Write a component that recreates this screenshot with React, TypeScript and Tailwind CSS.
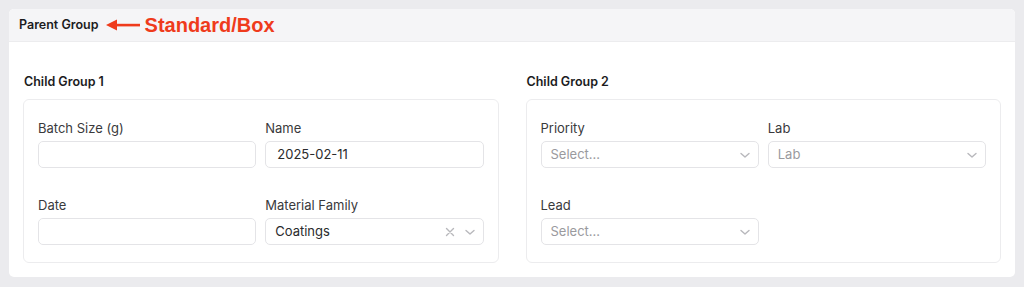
import React from "react";

const Chevron = () => (
  <svg width="12" height="12" viewBox="0 0 12 12" fill="none" stroke="#b8b8bc" strokeWidth="1.4" strokeLinecap="round" strokeLinejoin="round">
    <path d="M2 4.5 L6 8 L10 4.5" />
  </svg>
);

const Cross = () => (
  <svg width="10" height="10" viewBox="0 0 10 10" fill="none" stroke="#b8b8bc" strokeWidth="1.4" strokeLinecap="round">
    <path d="M1.5 1.5 L8.5 8.5 M8.5 1.5 L1.5 8.5" />
  </svg>
);

const Label = ({ children }: { children: React.ReactNode }) => (
  <div className="h-4 leading-4 text-[13px] text-[#3a3a3c] mb-[5px]">{children}</div>
);

const Input = ({ value }: { value?: string }) => (
  <div className="h-[27px] rounded-[5px] border border-[#e4e4e7] bg-white flex items-center px-[11px] text-[13px] text-[#2a2a2c]">
    {value}
  </div>
);

const Select = ({ value, placeholder, clear }: { value?: string; placeholder?: string; clear?: boolean }) => (
  <div className="h-[27px] rounded-[5px] border border-[#e4e4e7] bg-white flex items-center pl-[9px] pr-[7px] text-[13px]">
    <span className={value ? "flex-1 text-[#2a2a2c]" : "flex-1 text-[#9a9a9e]"}>{value ?? placeholder}</span>
    {clear && (
      <span className="mr-[9px] flex items-center">
        <Cross />
      </span>
    )}
    <Chevron />
  </div>
);

const Field = ({ label, children }: { label: string; children: React.ReactNode }) => (
  <div className="flex flex-col">
    <Label>{label}</Label>
    {children}
  </div>
);

const ChildGroup = ({ title, children }: { title: string; children: React.ReactNode }) => (
  <div className="flex-1 flex flex-col">
    <div className="h-4 leading-4 text-[12.5px] font-semibold text-[#1c1c1e] mb-[9px] pl-px">{title}</div>
    <div className="rounded-[6px] border border-[#ececee] pt-[20px] px-[14px] pb-[17px]">
      <div className="grid grid-cols-2 gap-x-[9px] gap-y-[29px]">{children}</div>
    </div>
  </div>
);

export default function App() {
  return (
    <div
      className="w-[1024px] h-[287px] bg-[#ebebee] p-[9px]"
      style={{ fontFamily: "Inter, 'Noto Sans', sans-serif" }}
    >
      <div className="bg-white rounded-[5px] overflow-hidden h-[268px] w-[1006px] flex flex-col">
        <div className="h-[33px] bg-[#f5f5f7] border-b border-[#ececee] flex items-center pl-[10px]">
          <span className="text-[12.5px] font-semibold text-[#1c1c1e]">Parent Group</span>
          <svg width="34" height="12" viewBox="0 0 34 12" className="ml-[7px]">
            <path d="M0 6 L11 0.5 L11 11.5 Z" fill="#ef3b1c" />
            <rect x="10" y="4.8" width="24" height="2.6" fill="#ef3b1c" />
          </svg>
          <span
            className="ml-[5px] text-[20px] font-bold text-[#ef3b1c]"
            style={{ fontFamily: "'Liberation Sans', Arial, sans-serif" }}
          >
            Standard/Box
          </span>
        </div>
        <div className="flex gap-[27px] px-[14px] pt-[32px] pb-[14px]">
          <ChildGroup title="Child Group 1">
            <Field label="Batch Size (g)">
              <Input />
            </Field>
            <Field label="Name">
              <Input value="2025-02-11" />
            </Field>
            <Field label="Date">
              <Input />
            </Field>
            <Field label="Material Family">
              <Select value="Coatings" clear />
            </Field>
          </ChildGroup>
          <ChildGroup title="Child Group 2">
            <Field label="Priority">
              <Select placeholder="Select..." />
            </Field>
            <Field label="Lab">
              <Select placeholder="Lab" />
            </Field>
            <Field label="Lead">
              <Select placeholder="Select..." />
            </Field>
          </ChildGroup>
        </div>
      </div>
    </div>
  );
}
